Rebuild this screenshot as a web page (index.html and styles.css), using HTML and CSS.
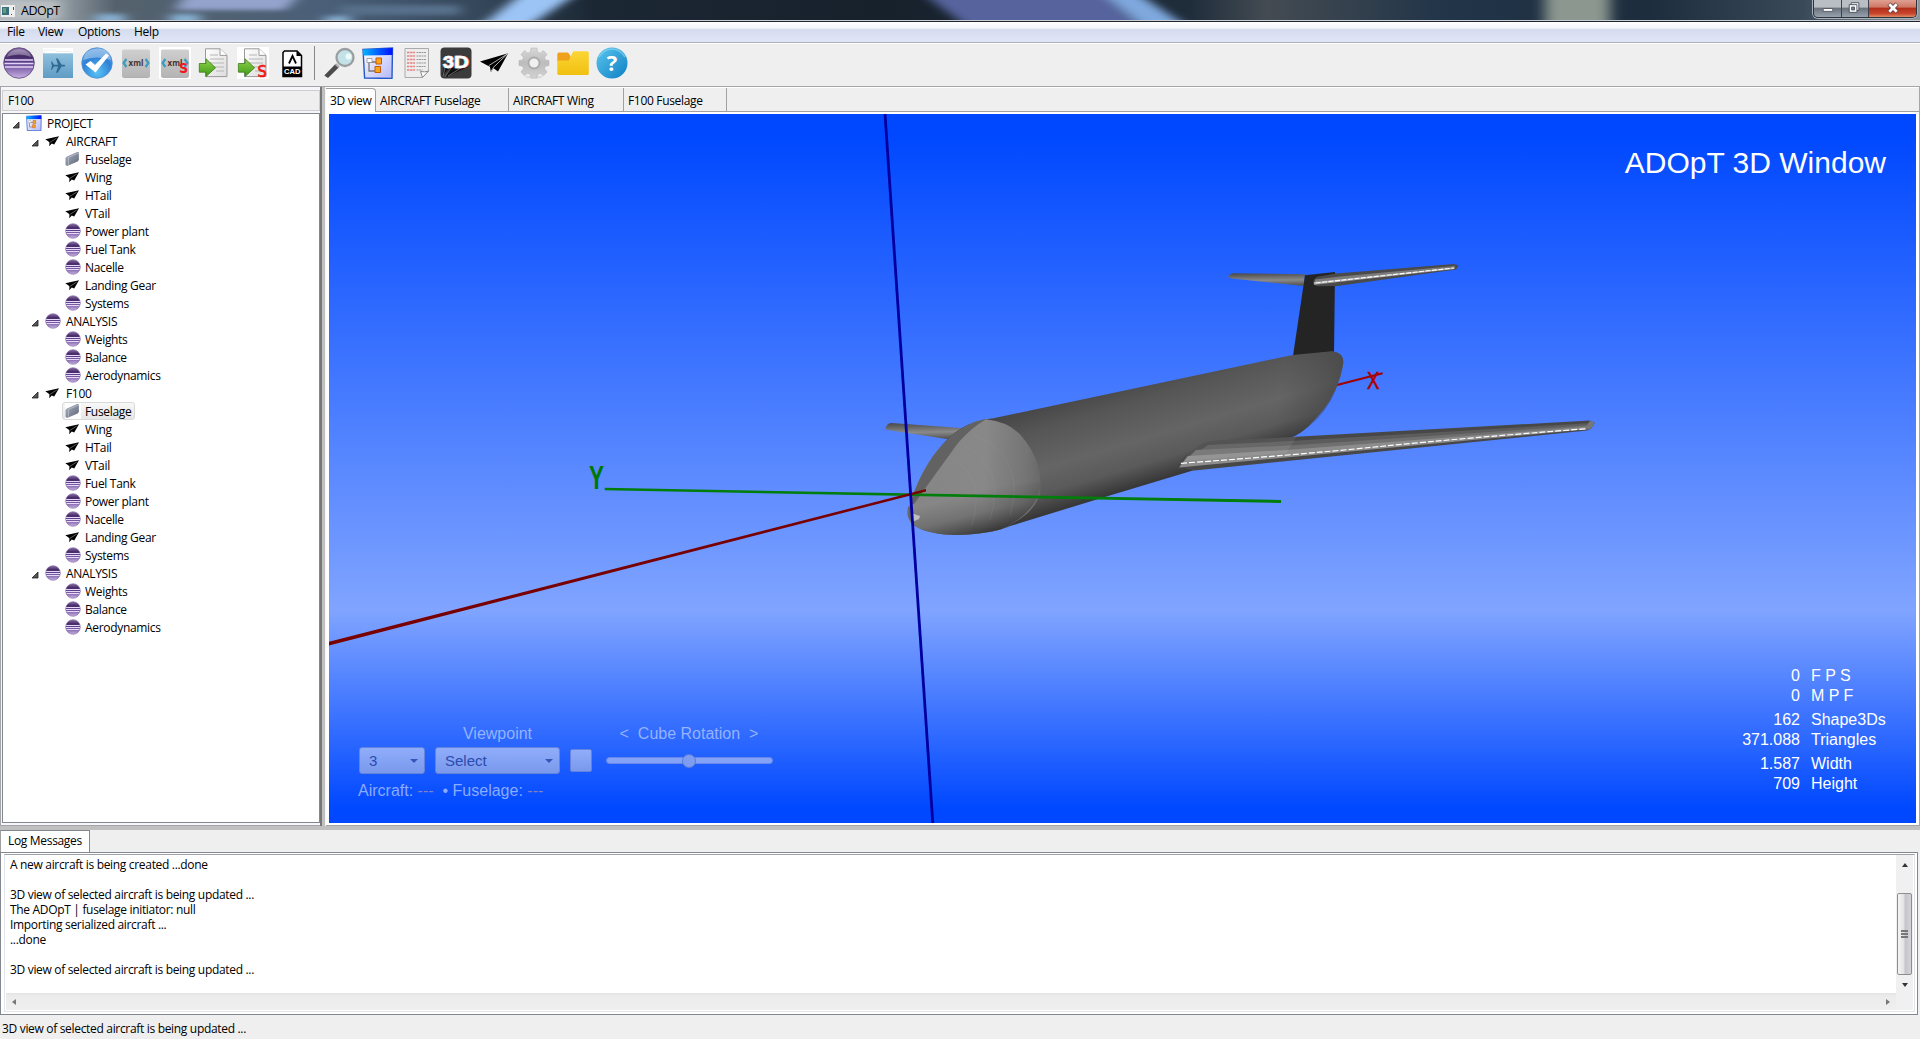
FILE: index.html
```html
<!DOCTYPE html>
<html lang="en">
<head>
<meta charset="utf-8">
<title>ADOpT</title>
<link rel="stylesheet" href="styles.css">
</head>
<body>
<svg class="defs" width="0" height="0">
  <defs>
    <linearGradient id="gPurple" x1="0" y1="0" x2="0" y2="1"><stop offset="0" stop-color="#8a6fa8"/><stop offset=".28" stop-color="#452a66"/><stop offset=".5" stop-color="#5f4290"/><stop offset="1" stop-color="#c9b2e4"/></linearGradient>
    <linearGradient id="gFolder" x1="0" y1="0" x2="0" y2="1"><stop offset="0" stop-color="#8fc0dd"/><stop offset="1" stop-color="#5f9bc4"/></linearGradient>
    <radialGradient id="gCheck" cx=".5" cy=".8" r=".8"><stop offset="0" stop-color="#5cc3f5"/><stop offset=".6" stop-color="#2f82d6"/><stop offset="1" stop-color="#5f9fe0"/></radialGradient>
    <linearGradient id="gGrey" x1="0" y1="0" x2="0" y2="1"><stop offset="0" stop-color="#cfcfcf"/><stop offset="1" stop-color="#b4b4b4"/></linearGradient>
    <linearGradient id="gGreen" x1="0" y1="0" x2="0" y2="1"><stop offset="0" stop-color="#8fd24a"/><stop offset="1" stop-color="#3f9a16"/></linearGradient>
    <linearGradient id="gPage" x1="0" y1="0" x2="1" y2="1"><stop offset="0" stop-color="#fff"/><stop offset="1" stop-color="#dcdcdc"/></linearGradient>
    <linearGradient id="gWinBar"><stop offset="0" stop-color="#00b4ff"/><stop offset="1" stop-color="#0010ff"/></linearGradient>
    <linearGradient id="gWinBody" x1="0" y1="0" x2="1" y2="1"><stop offset="0" stop-color="#fff"/><stop offset="1" stop-color="#b4b8f8"/></linearGradient>
    <linearGradient id="gGear" x1="0" y1="0" x2="0" y2="1"><stop offset="0" stop-color="#d8d8d8"/><stop offset=".5" stop-color="#bcbcbc"/><stop offset="1" stop-color="#d2d2d2"/></linearGradient>
    <linearGradient id="gYellow" x1="0" y1="0" x2="0" y2="1"><stop offset="0" stop-color="#fcd535"/><stop offset="1" stop-color="#f0c010"/></linearGradient>
    <linearGradient id="gHelp" x1="0" y1="0" x2="1" y2="1"><stop offset="0" stop-color="#5cc6ee"/><stop offset="1" stop-color="#0d7fc4"/></linearGradient>
    <linearGradient id="gSlab" x1="0" y1="0" x2="1" y2="1"><stop offset="0" stop-color="#aab0c0"/><stop offset="1" stop-color="#5f6878"/></linearGradient>

    <symbol id="ball" viewBox="0 0 32 32">
      <circle cx="16" cy="16" r="15.3" fill="url(#gPurple)" stroke="#5b4579" stroke-width=".8"/>
      <path d="M3.5 10Q7 2.5 16 2.3T28.5 10Q16 5 3.5 10z" fill="#fff" opacity=".3"/>
      <path d="M2 13h28M1.500 16.500h29M2 20h28" stroke="#e3d4f5" stroke-width="1.500"/>
    </symbol>
    <symbol id="ballSmall" viewBox="0 0 16 16">
      <circle cx="8" cy="8" r="7.3" fill="url(#gPurple)" stroke="#7d66a0" stroke-width=".6"/>
      <path d="M1.200 6.500h13.600M1 8.500h14M1.600 10.500h12.800" stroke="#e6d8f6" stroke-width="1"/>
    </symbol>
    <symbol id="plane" viewBox="0 0 32 32">
      <path d="M1 14.500L29.200 6.300 19 24.500 14.600 21.300 11.800 25.300 11 19.800 7.500 18z"/>
      <path d="M9.800 18.600L28.600 6.800 13.800 21M11.500 24.800l2.800-3.800" stroke="#ddd" stroke-width=".8" fill="none"/>
    </symbol>
    <symbol id="planeSmall" viewBox="0 0 16 16">
      <path d="M.3 6.300L14 3.200 9.200 11.600 6.800 10.600 4.200 13.300 4.500 9.600 3.200 8.200z"/>
      <path d="M5 9.300L11.800 5" stroke="#999" stroke-width=".6"/>
    </symbol>
    <symbol id="slab" viewBox="0 0 16 16">
      <path d="M.5 7.200Q1.200 5.800 2.500 5.200L12.300 1.100Q13.900.8 13.900 2.200V8.800L12.700 10.400 2.700 14.800Q.5 15 .5 13.400z" fill="url(#gSlab)"/>
      <path d="M3.400 6.300v7.500M3.400 6.300l10.200-4.200" stroke="#c4cad6" stroke-width=".7" fill="none"/>
    </symbol>
    <symbol id="tree" viewBox="0 0 32 32">
      <path d="M1 2.500L30.500 1 30 31.500 2.600 31z" fill="url(#gWinBody)" stroke="#2458c8" stroke-width="1.400"/>
      <path d="M1 2.500L30.500 1V8L1.400 8.600z" fill="url(#gWinBar)"/>
      <path d="M7 12.500V24h6M7 15h8" stroke="#777" stroke-width="1.300" fill="none"/>
      <path d="M5 11.500h5v4H5z" fill="#fff" stroke="#888" stroke-width=".7"/>
      <path d="M14 11h5.500v6H14zM13 19.500h5.500v6H13z" fill="#ffa21c" stroke="#c25a08"/>
    </symbol>
    <symbol id="page" viewBox="0 0 32 32">
      <path d="M7.500 1.800H22l7 6.600V29.600H7.500z" fill="url(#gPage)" stroke="#999"/>
      <path d="M22 1.800V8.400h7" fill="#fff" stroke="#999"/>
      <path d="M12 8h8M12 12h14M12 16h14M14 20h12M18 24h8" stroke="#b5b5b5" stroke-width="1.200"/>
      <path d="M1.300 16.500H8V11.800L17.600 20.800 8 29.500V25.200H1.300z" fill="url(#gGreen)" stroke="#3c7a18" stroke-width=".8"/>
    </symbol>
    <symbol id="xml" viewBox="0 0 32 32">
      <rect x="2" y="2.500" width="28" height="28" rx="1.500" fill="url(#gGrey)"/>
      <path d="M3.500 30.500h25" stroke="#999" opacity=".6"/>
      <path d="M6.400 12L3.600 16l2.800 4M25.600 12l2.800 4-2.800 4" fill="none" stroke="#3a9cc0" stroke-width="2.200"/>
      <text x="8.600" y="18.600" textLength="14.800" lengthAdjust="spacingAndGlyphs" class="xmltext">xml</text>
    </symbol>
    <symbol id="twist" viewBox="0 0 8 8"><path d="M7 1V7H1z" fill="#555" stroke="#222" stroke-width=".8"/></symbol>
  </defs>
</svg>

<header class="titlebar">
  <svg class="glass" viewBox="0 0 1920 20" preserveAspectRatio="none">
    <defs>
      <filter id="soft" x="-5%" y="-100%" width="110%" height="300%"><feGaussianBlur stdDeviation="7 2"/></filter>
      <linearGradient id="gBar"><stop offset="0" stop-color="#b0b6ba"/><stop offset=".035" stop-color="#8b959c"/><stop offset=".06" stop-color="#55626d"/><stop offset=".17" stop-color="#4a5f78"/><stop offset=".25" stop-color="#35475a"/><stop offset=".31" stop-color="#1b2733"/><stop offset=".46" stop-color="#17212c"/><stop offset=".62" stop-color="#1f2d3b"/><stop offset=".66" stop-color="#444b52"/><stop offset=".75" stop-color="#223549"/><stop offset=".86" stop-color="#1d2d3d"/><stop offset=".94" stop-color="#3a4a59"/><stop offset="1" stop-color="#8e969c"/></linearGradient>
    </defs>
    <rect width="1920" height="20" fill="url(#gBar)"/>
    <g filter="url(#soft)">
      <path d="M0 0h60v20H0z" fill="#b9bfc3"/>
      <path d="M185 -5h115L285 10H175z" fill="#93a3cc"/>
      <path d="M95 14h30v10h-30zM170 14h30v10h-30zM325 16h25v8h-25z" fill="#86aed0"/>
      <path d="M340 5h120v10H340z" fill="#56708a"/>
      <path d="M520 -5h55L530 25H482z" fill="#9cc4f5"/>
      <path d="M925 -5h180l32 30H965z" fill="#57639d"/>
      <path d="M1105 -5h35l45 30h-45z" fill="#7fa8de"/>
      <path d="M1545 -5h65v30h-65z" fill="#8b978f"/>
    </g>
  </svg>
  <svg class="appicon" viewBox="0 0 14 12"><path d="M0 0h14v12H0z" fill="#eee"/><path d="M1 2h7v8H1z" fill="#3b6f7c"/><path d="M2 3h3v5H2z" fill="#5fa07c"/><path d="M10 9h1v1h-1zM12 2h1v3h-1z" fill="#357"/></svg>
  <span class="apptitle">ADOpT</span>
  <div class="winbtns">
    <span class="wb min"><svg viewBox="0 0 28 17"><path d="M9.500 8.500h10v3h-10z" fill="#fff" stroke="#555b66"/></svg></span>
    <span class="wb max"><svg viewBox="0 0 27 17"><path d="M9.500 2.500h8v8h-8z" fill="#fff" stroke="#4c5360"/><path d="M7.500 4.500h8v8h-8z" fill="#fff" stroke="#4c5360"/><path d="M10 7h3v3h-3z" fill="#7c8492" stroke="#4c5360"/></svg></span>
    <span class="wb close"><svg viewBox="0 0 47 17"><path d="M20 4l8 8M28 4l-8 8" stroke="#5b3a3a" stroke-width="4.500"/><path d="M20.300 4.300l7.400 7.400M27.700 4.300l-7.400 7.400" stroke="#fff" stroke-width="2.800"/></svg></span>
  </div>
</header>

<nav class="menubar"><span class="m-file">File</span><span class="m-view">View</span><span class="m-options">Options</span><span class="m-help">Help</span></nav>

<div class="toolbar">
  <span class="tool"><svg><use href="#ball"/></svg></span>
  <span class="tool"><svg viewBox="0 0 32 32"><path d="M1 1h30v30H1z" fill="#fff"/><path d="M2 3h11l2 1.500h14V8H2z" fill="#fff" stroke="#ddd" stroke-width=".5"/><path d="M1 6.300h30V31H1z" fill="url(#gFolder)"/><path d="M10 14.500l2 3.200h4l-2-6.200h1.800l3.800 6.200h2.900q1.800.9 0 1.900h-2.900l-3.800 6.200H14l2-6.200h-4l-2 3.200H9l1-4.100-1-4.200z" fill="#2f6c95"/></svg></span>
  <span class="tool"><svg viewBox="0 0 32 32"><circle cx="16" cy="16" r="15.300" fill="url(#gCheck)" stroke="#4d8fd0" stroke-width=".7"/><path d="M2 13Q4 2 16 1.500T30 13Q16 8 2 13z" fill="#fff" opacity=".35"/><path d="M4.500 17.500l5-3.500 4.500 4L25 6.500l3 2L14.500 25.500z" fill="#fff"/></svg></span>
  <span class="tool"><svg><use href="#xml"/></svg></span>
  <span class="tool white"><svg viewBox="0 0 32 32"><use href="#xml"/><text x="20" y="26" class="red-s">S</text></svg></span>
  <span class="tool"><svg><use href="#page"/></svg></span>
  <span class="tool white"><svg viewBox="0 0 32 32"><use href="#page"/><text x="20.500" y="29.500" class="red-s big">S</text></svg></span>
  <span class="tool"><svg viewBox="0 0 32 32"><path d="M8.500 4h12.500l4.500 4.500V29.500H7V5.500z" fill="#fff" stroke="#000" stroke-width="1.500"/><path d="M20.500 4v5h5z"/><path d="M13 16.500l3.500-7.500 3.500 7.500" fill="none" stroke="#000" stroke-width="1.800"/><path d="M7 19.500h18.500v9.500H7z"/><text x="8" y="27.200" textLength="16.500" lengthAdjust="spacingAndGlyphs" class="cad">CAD</text></svg></span>
  <i class="sep"></i>
  <span class="tool"><svg viewBox="0 0 32 32"><path d="M1.300 28.500L12.500 17l3.500 3.300L5 31z" fill="#4b4b4b"/><path d="M12.500 17l3.500 3.300" stroke="#aaa" stroke-width="2"/><circle cx="22" cy="10.500" r="8.500" fill="#c3e2e8" stroke="#9a9ea0" stroke-width="2.300"/><circle cx="25.500" cy="9.500" r="3" fill="#eefafa"/></svg></span>
  <span class="tool"><svg><use href="#tree"/></svg></span>
  <span class="tool"><svg viewBox="0 0 32 32"><path d="M4 1.500h23.500V24l-6 6.500H4z" fill="#ededed" stroke="#aaa"/><path d="M6 5.500h8M6 9h8M6 12.500h8M6 16h8M6 19.500h8M6 23h8" stroke="#e88080" stroke-width="1.500" stroke-dasharray="2.500 .6"/><path d="M15.500 5.500h10M15.500 9h10M15.500 12.500h10M15.500 16h10M15.500 19.500h9M15.500 23h6" stroke="#999" stroke-width="1.200" stroke-dasharray="2 .5"/><path d="M21.500 30.500l-2-6q4 1 8-.5z" fill="#fff" stroke="#888"/></svg></span>
  <span class="tool"><svg viewBox="0 0 32 32"><rect x=".5" y=".5" width="31" height="31" rx="4" fill="#3b3b3b"/><path d="M4 20.500L2 29l8-8.500-5 10L28 20z" fill="#111"/><path d="M5 21L3 29M11 21L5 30M21 21L8 29" stroke="#888" stroke-width=".7"/><text x="2.200" y="21" textLength="26" lengthAdjust="spacingAndGlyphs" class="threed cyan">3D</text><text x="3.500" y="21.300" textLength="26" lengthAdjust="spacingAndGlyphs" class="threed pink">3D</text><text x="2.800" y="21" textLength="26" lengthAdjust="spacingAndGlyphs" class="threed">3D</text></svg></span>
  <span class="tool"><svg><use href="#plane"/></svg></span>
  <span class="tool"><svg viewBox="0 0 32 32"><ellipse cx="16" cy="30" rx="9" ry="1.600" fill="#ddd"/><g fill="url(#gGear)" stroke="#b0b0b0" stroke-width=".5"><path d="M12.500 5L13 1h6l.5 4 2.600 1.200L25.500 3.500 29 7.500l-2.500 3 1 2.500 3.500.5v5l-3.500.7-1 2.400L29 25l-3.500 3.700-3.300-2.500L19.500 27.500 19 31h-6l-.5-3.500-2.700-1.300L6.500 28.700 3 25l2.500-3.400-1-2.400L1 18.500v-5l3.500-.5 1-2.500L3 7.500 6.500 3.500 9.900 6.200z"/></g><circle cx="16" cy="16" r="5.500" fill="#f0f0f0" stroke="#aaa" stroke-width="1.800"/></svg></span>
  <span class="tool"><svg viewBox="0 0 32 32"><path d="M.3 7Q.3 5.500 2 5.500h9l2.500 3.500V15H.3z" fill="#f0a11b"/><path d="M.3 13.500h11.500l4-8.500q.5-.8 1.500-.8h13q1.500 0 1.500 1.500v21.100q0 1.300-1.500 1.300H1.800q-1.500 0-1.500-1.500z" fill="url(#gYellow)"/></svg></span>
  <span class="tool"><svg viewBox="0 0 32 32"><circle cx="16" cy="16" r="15.500" fill="url(#gHelp)"/><path d="M3 10Q8 2 16 2t13 8" fill="none" stroke="#8fdcf5" stroke-width="1.500" opacity=".6"/><text x="16" y="24" text-anchor="middle" class="help">?</text></svg></span>
</div>

<main class="work">
  <aside class="side">
    <div class="sidehead">F100</div>
    <ul class="treebox">
      <li class="l0"><svg class="tw"><use href="#twist"/></svg><svg class="ic"><use href="#tree"/></svg><span>PROJECT</span></li>
      <li class="l1"><svg class="tw"><use href="#twist"/></svg><svg class="ic"><use href="#planeSmall"/></svg><span>AIRCRAFT</span></li>
      <li class="l2"><svg class="ic"><use href="#slab"/></svg><span>Fuselage</span></li>
      <li class="l2"><svg class="ic"><use href="#planeSmall"/></svg><span>Wing</span></li>
      <li class="l2"><svg class="ic"><use href="#planeSmall"/></svg><span>HTail</span></li>
      <li class="l2"><svg class="ic"><use href="#planeSmall"/></svg><span>VTail</span></li>
      <li class="l2"><svg class="ic"><use href="#ballSmall"/></svg><span>Power plant</span></li>
      <li class="l2"><svg class="ic"><use href="#ballSmall"/></svg><span>Fuel Tank</span></li>
      <li class="l2"><svg class="ic"><use href="#ballSmall"/></svg><span>Nacelle</span></li>
      <li class="l2"><svg class="ic"><use href="#planeSmall"/></svg><span>Landing Gear</span></li>
      <li class="l2"><svg class="ic"><use href="#ballSmall"/></svg><span>Systems</span></li>
      <li class="l1"><svg class="tw"><use href="#twist"/></svg><svg class="ic"><use href="#ballSmall"/></svg><span>ANALYSIS</span></li>
      <li class="l2"><svg class="ic"><use href="#ballSmall"/></svg><span>Weights</span></li>
      <li class="l2"><svg class="ic"><use href="#ballSmall"/></svg><span>Balance</span></li>
      <li class="l2"><svg class="ic"><use href="#ballSmall"/></svg><span>Aerodynamics</span></li>
      <li class="l1"><svg class="tw"><use href="#twist"/></svg><svg class="ic"><use href="#planeSmall"/></svg><span>F100</span></li>
      <li class="l2 sel"><svg class="ic"><use href="#slab"/></svg><span>Fuselage</span></li>
      <li class="l2"><svg class="ic"><use href="#planeSmall"/></svg><span>Wing</span></li>
      <li class="l2"><svg class="ic"><use href="#planeSmall"/></svg><span>HTail</span></li>
      <li class="l2"><svg class="ic"><use href="#planeSmall"/></svg><span>VTail</span></li>
      <li class="l2"><svg class="ic"><use href="#ballSmall"/></svg><span>Fuel Tank</span></li>
      <li class="l2"><svg class="ic"><use href="#ballSmall"/></svg><span>Power plant</span></li>
      <li class="l2"><svg class="ic"><use href="#ballSmall"/></svg><span>Nacelle</span></li>
      <li class="l2"><svg class="ic"><use href="#planeSmall"/></svg><span>Landing Gear</span></li>
      <li class="l2"><svg class="ic"><use href="#ballSmall"/></svg><span>Systems</span></li>
      <li class="l1"><svg class="tw"><use href="#twist"/></svg><svg class="ic"><use href="#ballSmall"/></svg><span>ANALYSIS</span></li>
      <li class="l2"><svg class="ic"><use href="#ballSmall"/></svg><span>Weights</span></li>
      <li class="l2"><svg class="ic"><use href="#ballSmall"/></svg><span>Balance</span></li>
      <li class="l2"><svg class="ic"><use href="#ballSmall"/></svg><span>Aerodynamics</span></li>
    </ul>
  </aside>
  <div class="vsash"></div>
  <section class="editor">
    <div class="tabs"><span class="tab t1 on">3D view</span><span class="tab t2">AIRCRAFT Fuselage</span><span class="tab t3">AIRCRAFT Wing</span><span class="tab t4">F100 Fuselage</span></div>
    <div class="canvas">
      <svg class="scene" viewBox="329 114 1587 709">
        <defs>
          <linearGradient id="fus" gradientUnits="userSpaceOnUse" x1="1120" y1="378" x2="1151" y2="482"><stop offset="0" stop-color="#444"/><stop offset=".25" stop-color="#565656"/><stop offset=".6" stop-color="#656565"/><stop offset=".82" stop-color="#5a5a5a"/><stop offset="1" stop-color="#383838"/></linearGradient>
          <linearGradient id="nose" gradientUnits="userSpaceOnUse" x1="925" y1="470" x2="1043" y2="476"><stop offset="0" stop-color="#868686"/><stop offset=".5" stop-color="#888"/><stop offset=".85" stop-color="#757575"/><stop offset="1" stop-color="#676767"/></linearGradient>
          <linearGradient id="belly" gradientUnits="userSpaceOnUse" x1="962" y1="496" x2="972" y2="536"><stop offset="0" stop-color="#333" stop-opacity="0"/><stop offset=".5" stop-color="#333" stop-opacity=".25"/><stop offset="1" stop-color="#2c2c2c" stop-opacity=".85"/></linearGradient>
          <linearGradient id="tailEnd" gradientUnits="userSpaceOnUse" x1="1280" y1="390" x2="1342" y2="400"><stop offset="0" stop-color="#444" stop-opacity="0"/><stop offset="1" stop-color="#3c3c3c" stop-opacity=".6"/></linearGradient>
          <linearGradient id="farW" x1="0" y1="0" x2=".1" y2="1"><stop offset="0" stop-color="#484848"/><stop offset=".6" stop-color="#8a8a8a"/><stop offset="1" stop-color="#555"/></linearGradient>
        </defs>
        <path d="M1336 385.300L1382.600 373.300" stroke="#a00000" stroke-width="2"/>
        <text x="1367" y="388.500" font-size="23.500" textLength="12.500" lengthAdjust="spacingAndGlyphs" class="axis thin" fill="#b00000">X</text>
        <path d="M885.200 428.700Q887 423 891.500 423L964.200 428.300 949.700 439.600 888 430z" fill="url(#farW)"/>
        <path d="M1227.400 276.700L1232.300 273.300 1305 274.300 1303.500 286 1232 278.500z" fill="url(#farW)"/>
        <path d="M1305 275.300L1335 272 1334 353 1292.900 356.500z" fill="#242424"/>
        <path d="M1313.200 282.300Q1314 278 1318 276.500L1336 273.500 1453.800 264 1458.600 265.500 1456 269.500 1337.500 285.900 1318 286.200Q1313 286 1313.200 282.300z" fill="#4a4a4a"/>
        <path d="M1315 279.500L1340 276.500 1455 266 1454.500 268.500 1315 283.500z" fill="#7c7c7c"/>
        <path d="M1314 282L1454.500 267.500 1454.500 269 1314 284.800z" fill="#a8a8a8"/>
        <path d="M1315.600 283L1453.800 268" stroke="#fff" stroke-width="1.100" stroke-dasharray="5 1.500"/>
        <path d="M973.900 422.300Q982 419.500 993.300 418.300L1281.700 357.300 1292.900 355 1332.600 351.300Q1344 353 1343.300 363Q1342 374 1338.900 381Q1333 400 1315.700 418.500Q1302 435 1289 438L1194.500 470 1102.400 497.700 1010.300 526Q998 531 986 532.300Q966 535.500 949.700 534.700Q920 533 910.500 522Q906 513 910 504Q912 497 917.200 490Q919 481 927.900 464Q937 449 949.700 437Q961 427 973.900 422.300z" fill="url(#fus)"/>
        <path d="M1193 381Q1212 396 1211 420L1205 440 1289 438Q1333 420 1343.300 363 1344 353 1332.600 351.300L1281.700 357.300z" fill="url(#tailEnd)"/>
        <path d="M986 419.300Q1010 422 1022 436.700Q1042 460 1040.500 490Q1038 513 1000.600 529.500Q975 536 949.700 534.700Q920 533 910.500 522Q906 513 910 504Q917 481 927.900 464Q945 436 973.900 422.300z" fill="url(#nose)"/>
        <path d="M1041 482Q1038 513 1000.600 529.500Q975 536 949.700 534.700Q920 533 910.500 522L911 500 1000 486z" fill="url(#belly)"/>
        <path d="M973.900 422.300L986 419.300Q971 428 958 443Q934 476 914 504L910 504Q917 481 927.900 464Q945 436 973.900 422.300z" fill="#626262"/>
        <path d="M912 522l-1-9 9 3-1 3z" fill="#d0d0d0" opacity=".8"/>
        <path d="M908.500 506q-3 10 2.500 16l1-14z" fill="#666"/>
        <g fill="none" stroke="#9c9c9c" stroke-width=".6" opacity=".3"><path d="M955 460Q985 480 972 525"/><path d="M965 447Q1006 465 990 520"/><path d="M975 435Q1027 458 1010 515"/></g>
        <path d="M1221.100 440.300L1286.600 437.300 1589.500 420.500 1594.800 422.700 1591 428.700 1587 430.500 1194.500 470.500 1178 467.300Q1182 455 1199.300 445.500Q1209 440.800 1221.100 440.300z" fill="#474747"/>
        <path d="M1208 445L1290 441 1592 423 1590 428.500 1180.500 465z" fill="#5c5c5c"/>
        <path d="M1196 450L1290 445.500 1592 425 1590 428.500 1180 466z" fill="#707070"/>
        <path d="M1188 456L1286 450 1591 426.500 1590 429 1179 467.500z" fill="#8c8c8c"/>
        <path d="M1221.100 440.300L1297 436.800 1286 453 1183 461Q1188 451 1199.300 445.500Q1209 440.800 1221.100 440.300z" fill="#fff" opacity=".07"/>
        <path d="M1584 430l6-9.200 4.800 1.900-3.800 6z" fill="#777"/>
        <path d="M1180.900 463.300Q1290 455.500 1380 446.500T1587 428.700" fill="none" stroke="#fff" stroke-width="1.200" stroke-dasharray="6 2"/>
        <path d="M604.700 487.800L1281 500V503L604.700 490.200z" fill="#007d0a"/>
        <path d="M329 641.800L926 489V491.500L329 645.500z" fill="#780000"/>
        <path d="M885 114L932.800 823" stroke="#0000a0" stroke-width="2.800"/>
        <text x="589" y="489" font-size="33" textLength="15" lengthAdjust="spacingAndGlyphs" class="axis" fill="#007800">Y</text>
      </svg>
      <div class="hud">
        <h1>ADOpT 3D Window</h1>
        <div class="bottom">
          <div class="controls">
            <div class="col c1"><div class="lbl"></div><div class="combo">3<i></i></div></div>
            <div class="col c2"><div class="lbl">Viewpoint</div><div class="combo">Select<i></i></div></div>
            <div class="col c3"><div class="lbl"></div><div class="box"></div></div>
            <div class="col c4"><div class="lbl">&lt;&nbsp; Cube Rotation &nbsp;&gt;</div><div class="slider"><b></b></div></div>
            <div class="info">Aircraft: <em>---</em><span>• Fuselage: <em>---</em></span></div>
          </div>
          <dl class="stats">
            <dt>0</dt><dd>F P S</dd><dt>0</dt><dd>M P F</dd>
            <dt class="g">162</dt><dd class="g">Shape3Ds</dd><dt>371.088</dt><dd>Triangles</dd>
            <dt class="g">1.587</dt><dd class="g">Width</dd><dt>709</dt><dd>Height</dd>
          </dl>
        </div>
      </div>
    </div>
  </section>
</main>
<div class="hsash"></div>
<section class="log">
  <div class="logtabs"><span>Log Messages</span></div>
  <div class="logframe">
    <div class="logbox">
      <div class="logtext">A new aircraft is being created ...done

3D view of selected aircraft is being updated ...
The ADOpT | fuselage initiator: null
Importing serialized aircraft ...
...done

3D view of selected aircraft is being updated ...</div>
      <div class="vscroll"><i class="up"></i><div class="thumb"><u></u><u></u><u></u></div><i class="down"></i></div>
      <div class="hscroll"><i class="left"></i><i class="right"></i></div>
      <div class="corner"></div>
    </div>
  </div>
</section>
<footer class="status">3D view of selected aircraft is being updated ...</footer>
</body>
</html>
```
FILE: styles.css
```css
* { box-sizing: border-box; }
body {
  margin: 0;
  width: 1920px;
  height: 1039px;
  overflow: hidden;
  display: flex;
  flex-direction: column;
  background: #efefef;
  color: #000;
  font: 12px/15px "Open Sans", "Noto Sans", sans-serif;
  letter-spacing: -0.32px;
}
.defs { position: absolute; }
svg { display: block; }

.titlebar { position: relative; height: 22px; display: flex; border-bottom: 1px solid #20242c; box-shadow: inset 0 -1px #c9ced6; }
.glass { position: absolute; left: 0; top: 0; width: 1920px; height: 20px; }
.appicon { position: relative; width: 14px; height: 12px; margin: 5px 0 0 1px; }
.apptitle { position: relative; margin: 3px 0 0 6px; font-size: 12.5px; letter-spacing: -0.5px; }
.winbtns { position: relative; margin-left: auto; margin-right: 3px; display: flex; height: 18px; border: 1px solid #2e343c; border-top: 0; border-radius: 0 0 5px 5px; overflow: hidden; box-shadow: 0 0 0 1px #a9b0b8; }
.wb { border-right: 1px solid #3c434c; background: linear-gradient(#b9bec4 0 40%, #6c747e 50%, #97a2ae); }
.wb svg { width: 100%; height: 17px; }
.min { width: 28px; }
.max { width: 27px; }
.close { width: 47px; border: 0; background: linear-gradient(#dfa091 0, #cf7a68 40%, #b5301a 50%, #c8452c 80%, #de8a63); }

.menubar { height: 21px; display: flex; padding: 1px 0 0 7px; line-height: 17px; background: linear-gradient(#fff 0, #f3f5fa 30%, #d5dcee 38%, #e0e6f6 100%); border-bottom: 1px solid #aab0bd; }
.m-file { width: 31px; }
.m-view { width: 40px; }
.m-options { width: 56px; }

.toolbar { height: 44px; display: flex; padding-top: 2px; border-top: 1px solid #fff; border-bottom: 1px solid #a5a5a9; }
.tool { width: 39px; height: 34px; padding-right: 1px; display: flex; justify-content: center; align-items: center; }
.tool svg { width: 32px; height: 32px; overflow: visible; }
.white svg { background: #fff; }
.sep { width: 1px; height: 34px; margin: 0 5px 0 2px; background: #888; }
.xmltext { font: bold 8.5px "Open Sans", sans-serif; fill: #4a3030; letter-spacing: 0; }
.red-s { font: bold 14px "DejaVu Sans Condensed", "DejaVu Sans", sans-serif; fill: #f01818; letter-spacing: 0; }
.red-s.big { font-size: 16px; font-weight: normal; stroke: #f01818; stroke-width: .7; }
.cad { font: bold 8px "Liberation Sans", sans-serif; fill: #fff; letter-spacing: 0; }
.threed { font: 900 17px Lato, "Open Sans", sans-serif; fill: #fff; stroke: #fff; stroke-width: .6; letter-spacing: 0; }
.threed.cyan { fill: #3cc; stroke: #3cc; }
.threed.pink { fill: #e55; stroke: #e55; }
.help { font: bold 22px "Open Sans", sans-serif; fill: #fff; letter-spacing: 0; }

.work { height: 739px; display: flex; }
.side { width: 320px; display: flex; flex-direction: column; padding: 3px 0 0 1px; border-left: 1px solid #a5a5a9; border-bottom: 1px solid #a5a5a9; background: #f6f6f8; }
.sidehead { height: 21px; padding: 2px 5px; background: #efefef; border: 1px solid #cdcdd2; }
.treebox { list-style: none; margin: 2px 0 2px; padding: 0; flex: 1; background: #fff; border: 1px solid #828790; }
.treebox li { display: flex; align-items: center; height: 18px; }
.treebox span { padding-left: 5px; line-height: 17px; }
.tw { width: 8px; height: 8px; margin: 3px 5px 0 0; }
.ic { width: 16px; height: 16px; flex: none; }
.l0 { padding-left: 9px; }
.l0 .tw { margin-right: 6px; }
.l1 { padding-left: 28px; }
.l1 .tw { margin-right: 6px; }
.l2 { padding-left: 62px; }
.l2 span { padding-left: 4px; }
.treebox li.sel { margin-left: 59px; padding-left: 2px; width: 73px; border: 1px solid #d9d9d9; border-radius: 3px; background: linear-gradient(#f8f8f8, #e6e6e6); }
.sel .ic { background: #fff; }
.vsash { width: 6px; background: #c0c0c0; border-left: 2px solid #777; border-right: 1px solid #f4f4f4; }

.editor { flex: 1; display: flex; flex-direction: column; background: #fff; border-right: 1px solid #a5a5a9; border-bottom: 1px solid #a5a5a9; }
.tabs { height: 25px; display: flex; background: #efefef; border-bottom: 1px solid #a0a0a0; border-top: 1px solid #fff; }
.tab { height: 23px; padding: 5px 0 0 4px; border-right: 1px solid #a0a0a0; }
.tab.on { height: 24px; padding-top: 4px; background: #fff; border-top: 1px solid #a0a0a0; border-top-right-radius: 4px; }
.t1 { width: 50px; }
.t2 { width: 133px; }
.t3 { width: 115px; }
.t4 { width: 103px; }
.canvas { position: relative; width: 1587px; height: 709px; margin: 2px 0 0 3px; background: linear-gradient(#0048ff 0, #0048ff 3%, #80a4ff 70%, #0048ff 98%); }
.scene { width: 1587px; height: 709px; }
.axis { font-family: "Liberation Sans", Arial, sans-serif; font-weight: bold; letter-spacing: 0; }
.axis.thin { font-weight: normal; stroke: #b00000; stroke-width: .6; }

.hud { position: absolute; inset: 0; display: flex; flex-direction: column; justify-content: space-between; font-family: "Liberation Sans", Arial, sans-serif; letter-spacing: 0; color: #fff; }
.hud h1 { margin: 31px 30px 0 0; font-size: 30px; line-height: 36px; font-weight: normal; text-align: right; }
.bottom { display: flex; justify-content: space-between; align-items: flex-end; }
.controls { display: grid; grid-template-columns: 66px 125px 22px 170px; column-gap: 10px; margin: 0 0 18px 30px; font-size: 16px; line-height: 20px; color: rgba(190, 208, 255, .72); }
.col { display: flex; flex-direction: column; }
.lbl { height: 27px; text-align: center; padding-top: 4px; white-space: nowrap; }
.combo { height: 27px; padding: 3px 9px; color: #2b4cae; display: flex; justify-content: space-between; align-items: center; background: linear-gradient(#8fadfa, #7b99ec); border: 1px solid #6483dc; border-radius: 3px; font-size: 15px; }
.combo i { border: 4px solid transparent; border-top: 4px solid #3556b8; border-bottom: 0; margin-right: -3px; }
.box { width: 22px; height: 23px; margin-top: 2px; border: 1px solid #6483dc; border-radius: 2px; background: linear-gradient(#8fadfa, #7b99ec); }
.c4 { padding-left: 4px; }
.slider { height: 7px; width: 167px; margin-top: 10px; border-radius: 4px; background: #83a2f8; border: 1px solid #6788ea; }
.slider b { display: block; width: 14px; height: 14px; margin: -4px 0 0 75px; border-radius: 50%; background: #7f9df0; border: 1px solid #5c7bd6; }
.info { grid-column: 1 / -1; padding-top: 7px; height: 31px; margin-left: -1px; }
.info em { font-style: normal; color: rgba(190, 150, 160, .7); }
.info span { margin-left: 9px; }
.stats { display: grid; grid-template-columns: 90px 75px; column-gap: 11px; margin: 0 30px 29px 0; font-size: 16px; line-height: 20px; }
.stats dt { text-align: right; }
.stats dd { margin: 0; }
.stats .g { padding-top: 4px; }

.hsash { height: 4px; background: #c0c0c0; }
.log { height: 185px; display: flex; flex-direction: column; }
.logtabs { height: 23px; display: flex; }
.logtabs span { width: 90px; padding: 2px 0 0 7px; background: #fff; border: 1px solid #828790; border-bottom: 0; border-left-color: #a0a0a0; }
.logframe { width: 1918px; height: 163px; margin-top: -1px; padding: 1px 2px 2px 3px; background: #fff; border: 1px solid #828790; }
.logbox { height: 158px; display: grid; grid-template-columns: 1fr 17px; grid-template-rows: 1fr 17px; padding: 0 1px 1px; border: 1px solid #e3e3ea; border-top-color: #a0a0a8; }
.logtext { white-space: pre; padding: 2px 0 0 4px; }
.vscroll { display: flex; flex-direction: column; align-items: center; background: #f0f0f0; }
.vscroll i { border: 3px solid transparent; }
.vscroll .up { border-bottom: 4px solid #333; border-top: 0; margin: 8px 0 26px; }
.vscroll .down { border-top: 4px solid #333; border-bottom: 0; margin-top: 8px; }
.thumb { width: 15px; height: 82px; display: flex; flex-direction: column; align-items: center; justify-content: center; gap: 1px; border: 1px solid #8d8d8d; border-radius: 2px; background: linear-gradient(90deg, #f5f5f5, #e2e2e6 45%, #c4c4ca 55%, #d4d4da); }
.thumb u { width: 7px; height: 2px; background: #777; }
.hscroll { display: flex; justify-content: space-between; align-items: center; padding: 0 6px; background: linear-gradient(#e4e4e4, #ececec 20%, #efefef); }
.hscroll i { border: 3px solid transparent; }
.hscroll .left { border-right: 4px solid #777; border-left: 0; }
.hscroll .right { border-left: 4px solid #777; border-right: 0; }
.corner { background: #f0f0f0; }
.status { flex: 1; padding: 6px 0 0 2px; }
```
